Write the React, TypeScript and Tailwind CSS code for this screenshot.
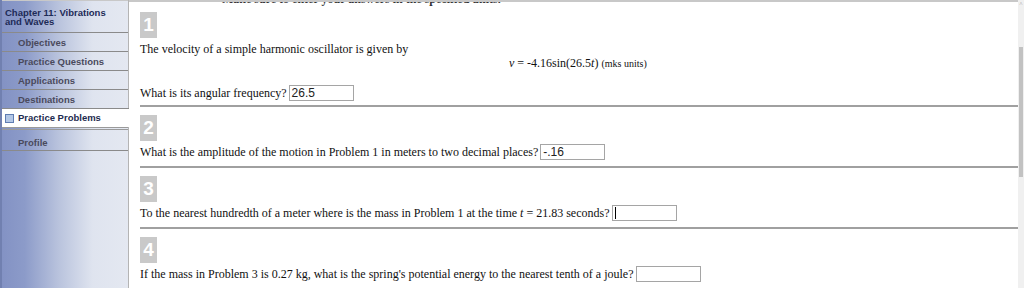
const menu = ['Objectives', 'Practice Questions', 'Applications', 'Destinations'];

function NumBox({ n }: { n: number }) {
  return (
    <div className="w-[17px] h-[26px] shrink-0 bg-[#c9c9c9] text-white font-bold text-[19px] leading-[26px] text-center font-['Liberation_Sans',Arial,sans-serif]">
      {n}
    </div>
  );
}

function Answer({ value, caret }: { value?: string; caret?: boolean }) {
  return (
    <div className="ml-[2px] w-[65px] h-[16px] border border-[#a5a5a5] bg-white flex items-center pl-[2px] text-[12px] text-[#222] font-['Liberation_Sans',Arial,sans-serif]">
      {caret && <span className="w-px h-[12px] bg-black" />}
      {value}
    </div>
  );
}

function Problem({ n, children }: { n: number; children: React.ReactNode }) {
  return (
    <div className="h-[61px] shrink-0 border-b-2 border-[#a0a0a0] pt-[8px] flex flex-col">
      <NumBox n={n} />
      <div className="h-[21px] flex items-center text-[12px]">{children}</div>
    </div>
  );
}

export default function App() {
  return (
    <div className="w-[1024px] h-[288px] flex bg-white overflow-hidden font-['Liberation_Serif','Times_New_Roman',serif] text-[#111]">
      {/* sidebar */}
      <div className="w-[129px] h-full shrink-0 border-r border-[#b4b4b4] border-l-2 border-l-[#7180b0] bg-[linear-gradient(to_right,#8392c4_0%,#8c9bc9_18%,#b9c3dd_45%,#dfe4ef_72%,#e4e8f1_100%)] font-['Liberation_Sans',Arial,sans-serif] font-bold text-[9.5px]">
        <div className="h-[32px] pt-[7px] pl-[3px] leading-[9px] text-[#1d2b57] border-t border-[#c8c8c8]">
          Chapter 11: Vibrations
          <br />
          and Waves
        </div>
        {menu.map((m) => (
          <div key={m} className="h-[19px] border-t border-[#8a8a8a] pl-[16px] leading-[19px] text-[#4a4a5c]">
            {m}
          </div>
        ))}
        <div className="h-[19px] border-t border-[#8a8a8a] bg-white -mr-px flex items-center pl-[3px] gap-[4px] text-[#1d2b4f]">
          <span className="w-[9px] h-[9px] border border-[#5f7db3] bg-[#b3c7e6]" />
          Practice Problems
        </div>
        <div className="h-[23px] border-t-[3px] border-double border-[#9a9a9a] pl-[16px] leading-[25px] text-[#4a4a5c]">Profile</div>
        <div className="border-t border-[#8a8a8a]" />
      </div>

      {/* content */}
      <div className="flex-1 h-full border-t-2 border-[#c8c8c8] pl-[11px] flex flex-col">
        <div className="h-[10px] shrink-0 overflow-hidden">
          <div className="-mt-[10px] pl-[82px] text-[12px] leading-[14px] font-bold text-[#333]">
            Make sure to enter your answers in the specified units.
          </div>
        </div>
        <div className="h-[95px] shrink-0 border-b-2 border-[#a0a0a0] flex flex-col">
          <NumBox n={1} />
          <div className="mt-[4px] text-[12px] leading-[14px]">The velocity of a simple harmonic oscillator is given by</div>
          <div className="text-[12px] leading-[14px] pl-[369px]">
            <i>v</i> = -4.16sin(26.5<i>t</i>) <span className="text-[10px]">(mks units)</span>
          </div>
          <div className="mt-[13px] flex items-center text-[12px]">
            What is its angular frequency? <Answer value="26.5" />
          </div>
        </div>
        <Problem n={2}>
          What is the amplitude of the motion in Problem 1 in meters to two decimal places? <Answer value="-.16" />
        </Problem>
        <Problem n={3}>
          To the nearest hundredth of a meter where is the mass in Problem 1 at the time&nbsp;<i>t</i>&nbsp;= 21.83 seconds?{' '}
          <Answer caret />
        </Problem>
        <Problem n={4}>
          If the mass in Problem 3 is 0.27 kg, what is the spring's potential energy to the nearest tenth of a joule? <Answer />
        </Problem>
      </div>

      {/* scrollbar */}
      <div className="w-[6px] h-full bg-[#f0f0f0] flex flex-col items-center">
        <div className="h-[8px] text-[6px] leading-[8px] text-[#999]">˄</div>
        <div className="mt-[39px] w-[4px] h-[130px] bg-[#c2c2c2]" />
      </div>
    </div>
  );
}
